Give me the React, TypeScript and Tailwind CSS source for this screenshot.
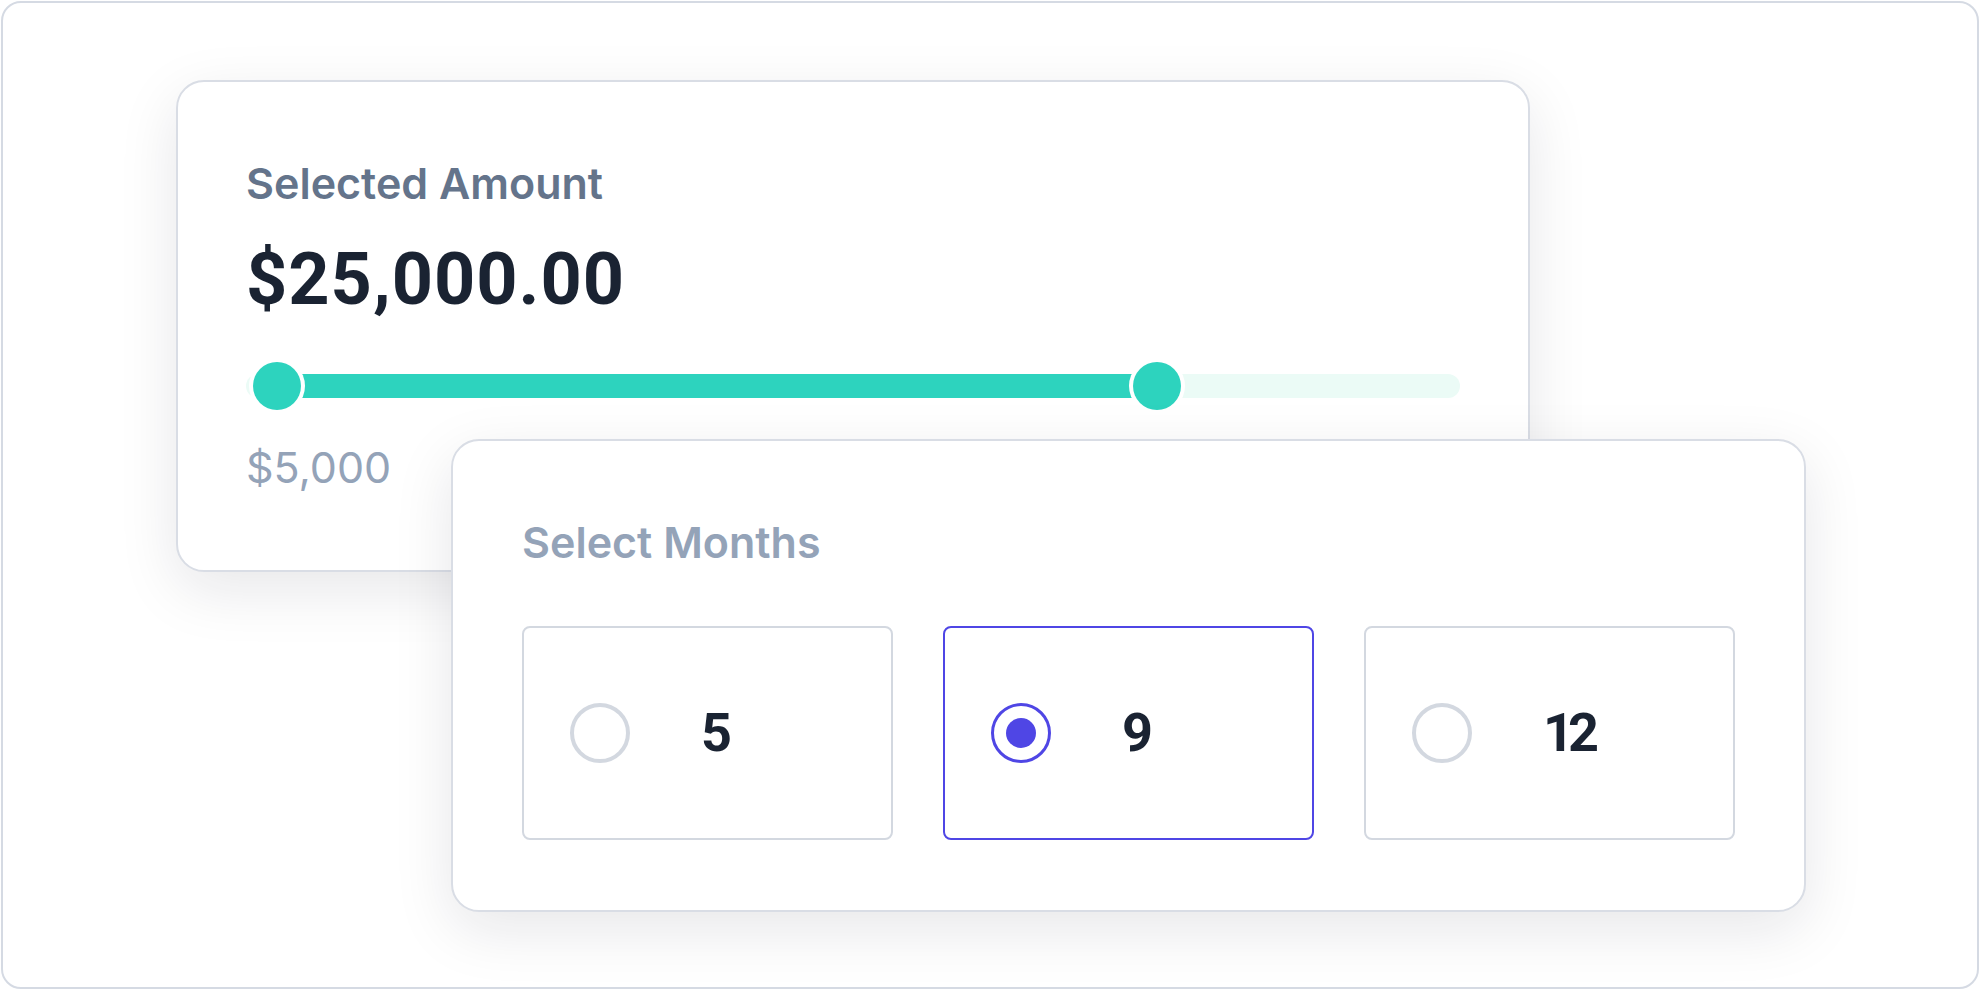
import React from 'react';

const months = [
  { value: 5, selected: false },
  { value: 9, selected: true },
  { value: 12, selected: false },
];

function AmountSlider() {
  return (
    <div className="relative mt-[45px] h-[50px] w-full">
      <div className="absolute inset-x-0 top-[13px] h-[24px] rounded-full bg-[#ebfbf6]" />
      <div className="absolute left-[10px] top-[13px] h-[24px] w-[901px] bg-[#2dd3be]" />
      <div className="absolute left-[7px] top-px h-[48px] w-[48px] rounded-full bg-[#2dd3be] shadow-[0_0_0_4px_#ffffff]" />
      <div className="absolute left-[887px] top-px h-[48px] w-[48px] rounded-full bg-[#2dd3be] shadow-[0_0_0_4px_#ffffff]" />
    </div>
  );
}

function MonthOption({ value, selected }: { value: number; selected: boolean }) {
  return (
    <div
      className={`flex h-[214px] items-center rounded-[8px] border-2 bg-white pl-[46px] ${
        selected ? 'border-[#4f46e5]' : 'border-[#d3d8e0]'
      }`}
    >
      {selected ? (
        <div className="flex h-[60px] w-[60px] shrink-0 items-center justify-center rounded-full border-[3px] border-[#4f46e5]">
          <div className="h-[30px] w-[30px] rounded-full bg-[#4f46e5]" />
        </div>
      ) : (
        <div className="h-[60px] w-[60px] shrink-0 rounded-full border-[4px] border-[#d3d8e0]" />
      )}
      <span className="ml-[71px] font-['Roboto',sans-serif] text-[54px] font-bold leading-none tracking-[-6px] text-[#1a2332]">
        {value}
      </span>
    </div>
  );
}

export default function App() {
  return (
    <div className="min-h-screen bg-white p-px">
      <div className="h-[988px] rounded-[20px] border-2 border-[#d5dae3] bg-white pl-[173px] pt-[77px]">
        {/* amount card */}
        <div className="h-[492px] w-[1354px] rounded-[28px] border-2 border-[#d9dde5] bg-white px-[68px] pt-[80px] shadow-[0_18px_60px_rgba(15,23,42,0.10)]">
          <div className="font-['Inter',sans-serif] text-[43px] font-semibold leading-[43px] text-[#64748b]">
            Selected Amount
          </div>
          <div className="mt-[39px] font-['Roboto',sans-serif] text-[72px] font-bold leading-[72px] tracking-[1px] text-[#1a2332]">
            $25,000.00
          </div>
          <AmountSlider />
          <div className="mt-[35px] flex justify-between font-['Inter',sans-serif] text-[43px] leading-[43px] text-[#94a3b8]">
            <span>$5,000</span>
            <span>$50,000</span>
          </div>
        </div>

        {/* months card */}
        <div className="relative -mt-[133px] ml-[275px] w-[1355px] rounded-[28px] border-2 border-[#d9dde5] bg-white px-[69px] pb-[70px] pt-[80px] shadow-[0_18px_60px_rgba(15,23,42,0.10)]">
          <div className="font-['Inter',sans-serif] text-[43px] font-semibold leading-[43px] text-[#94a3b8]">
            Select Months
          </div>
          <div className="mt-[62px] grid grid-cols-3 gap-[50px]">
            {months.map((m) => (
              <MonthOption key={m.value} value={m.value} selected={m.selected} />
            ))}
          </div>
        </div>
      </div>
    </div>
  );
}
